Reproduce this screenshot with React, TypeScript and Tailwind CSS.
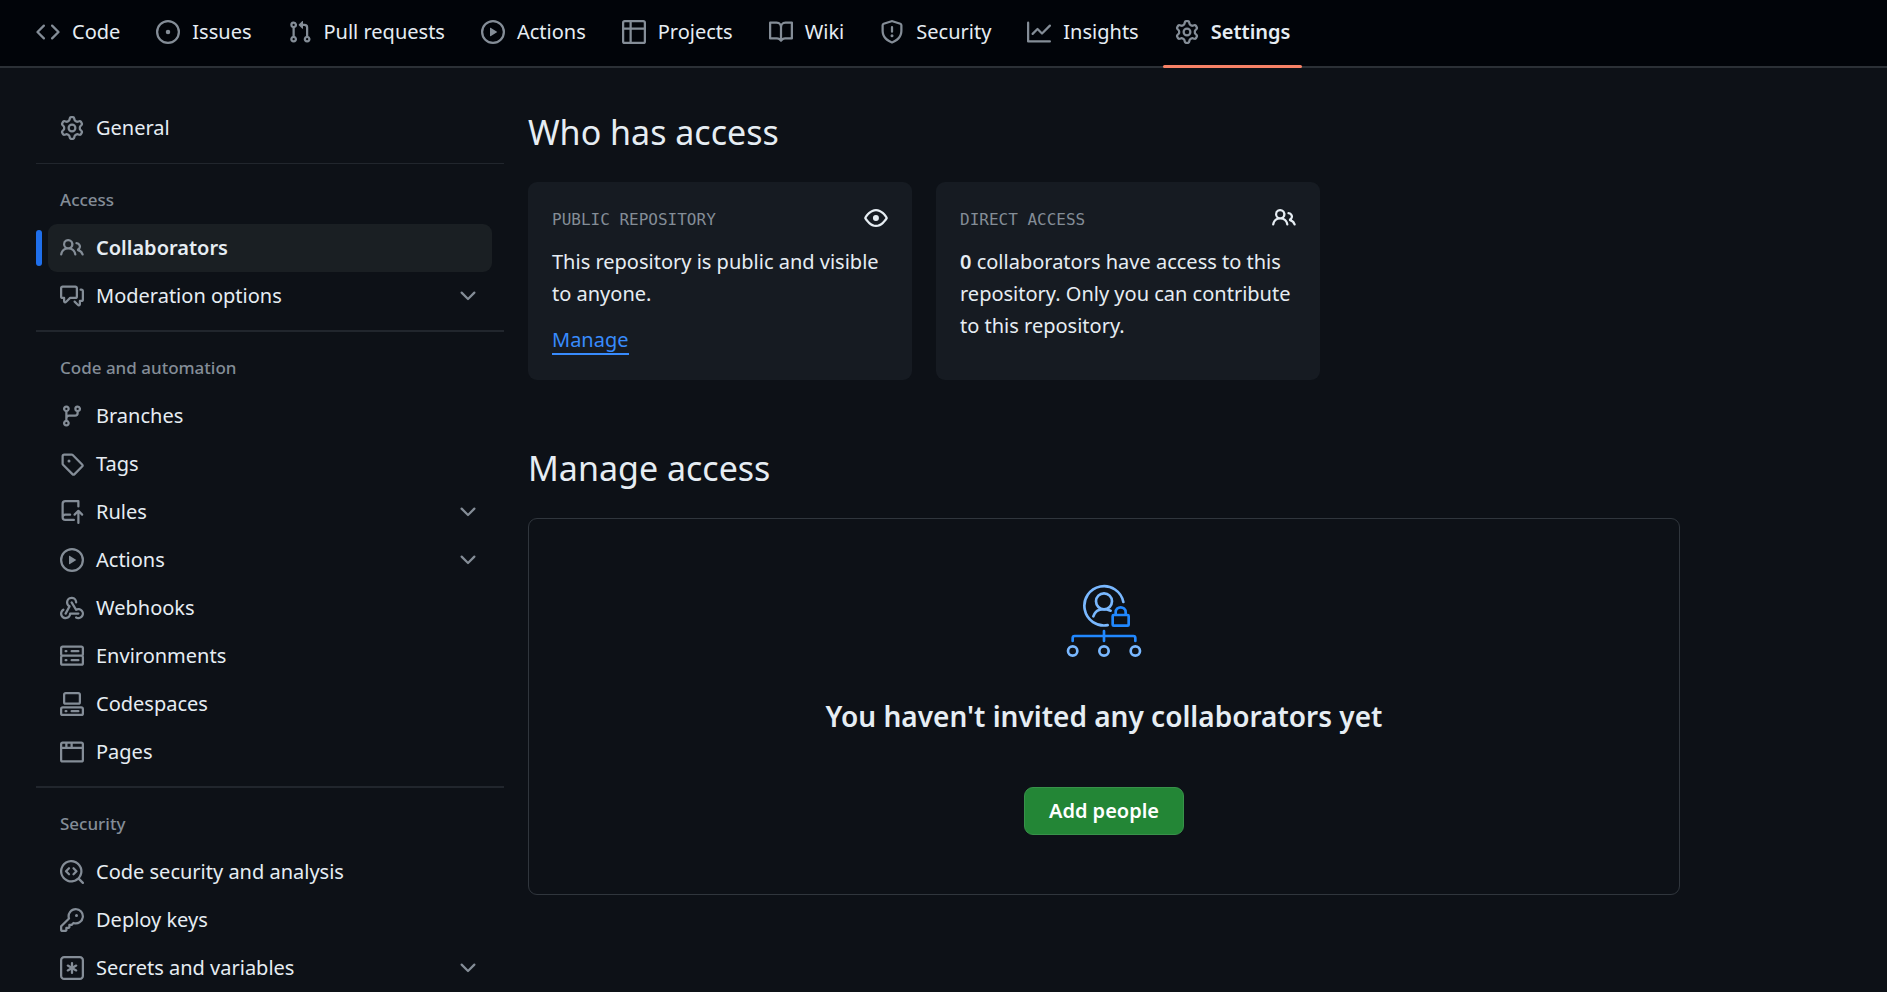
import React from "react";

const icons = {
  code: ["m11.28 3.22 4.25 4.25a.75.75 0 0 1 0 1.06l-4.25 4.25a.749.749 0 0 1-1.275-.326.749.749 0 0 1 .215-.734L13.94 8l-3.72-3.72a.749.749 0 0 1 .326-1.275.749.749 0 0 1 .734.215Zm-6.56 0a.751.751 0 0 1 1.042.018.751.751 0 0 1 .018 1.042L2.06 8l3.72 3.72a.749.749 0 0 1-.326 1.275.749.749 0 0 1-.734-.215L.47 8.53a.75.75 0 0 1 0-1.06Z"],
  issue: ["M8 9.5a1.5 1.5 0 1 0 0-3 1.5 1.5 0 0 0 0 3Z", "M8 0a8 8 0 1 1 0 16A8 8 0 0 1 8 0ZM1.5 8a6.5 6.5 0 1 0 13 0 6.5 6.5 0 0 0-13 0Z"],
  pull: ["M1.5 3.25a2.25 2.25 0 1 1 3 2.122v5.256a2.251 2.251 0 1 1-1.5 0V5.372A2.25 2.25 0 0 1 1.5 3.25Zm5.677-.177L9.573.677A.25.25 0 0 1 10 .854V2.5h1A2.5 2.5 0 0 1 13.5 5v5.628a2.251 2.251 0 1 1-1.5 0V5a1 1 0 0 0-1-1h-1v1.646a.25.25 0 0 1-.427.177L7.177 3.427a.25.25 0 0 1 0-.354ZM3.75 2.5a.75.75 0 1 0 0 1.5.75.75 0 0 0 0-1.5Zm0 9.5a.75.75 0 1 0 0 1.5.75.75 0 0 0 0-1.5Zm8.25.75a.75.75 0 1 0 1.5 0 .75.75 0 0 0-1.5 0Z"],
  play: ["M8 0a8 8 0 1 1 0 16A8 8 0 0 1 8 0ZM1.5 8a6.5 6.5 0 1 0 13 0 6.5 6.5 0 0 0-13 0Zm4.879-2.773 4.264 2.559a.25.25 0 0 1 0 .428l-4.264 2.559A.25.25 0 0 1 6 10.559V5.442a.25.25 0 0 1 .379-.215Z"],
  table: ["M0 1.75C0 .784.784 0 1.75 0h12.5C15.216 0 16 .784 16 1.75v12.5A1.75 1.75 0 0 1 14.25 16H1.75A1.75 1.75 0 0 1 0 14.25ZM6.5 6.5v8h7.75a.25.25 0 0 0 .25-.25V6.5Zm8-1.5V1.75a.25.25 0 0 0-.25-.25H6.5V5Zm-13 1.5v7.75c0 .138.112.25.25.25H5v-8ZM5 5V1.5H1.75a.25.25 0 0 0-.25.25V5Z"],
  book: ["M0 1.75A.75.75 0 0 1 .75 1h4.253c1.227 0 2.317.59 3 1.501A3.743 3.743 0 0 1 11.006 1h4.245a.75.75 0 0 1 .75.75v10.5a.75.75 0 0 1-.75.75h-4.507a2.25 2.25 0 0 0-1.591.659l-.622.621a.75.75 0 0 1-1.06 0l-.622-.621A2.25 2.25 0 0 0 5.258 13H.75a.75.75 0 0 1-.75-.75Zm7.251 10.324.004-5.073-.002-2.253A2.25 2.25 0 0 0 5.003 2.5H1.5v9h3.757a3.75 3.75 0 0 1 1.994.574ZM8.755 4.75l-.004 7.322a3.752 3.752 0 0 1 1.992-.572H14.5v-9h-3.495a2.25 2.25 0 0 0-2.25 2.25Z"],
  shield: ["M7.467.133a1.748 1.748 0 0 1 1.066 0l5.25 1.68A1.75 1.75 0 0 1 15 3.48V7c0 1.566-.32 3.182-1.303 4.682-.983 1.498-2.585 2.813-5.032 3.855a1.697 1.697 0 0 1-1.33 0c-2.447-1.042-4.049-2.357-5.032-3.855C1.32 10.182 1 8.566 1 7V3.48a1.75 1.75 0 0 1 1.217-1.667Zm.61 1.429a.25.25 0 0 0-.153 0l-5.25 1.68a.25.25 0 0 0-.174.238V7c0 1.358.275 2.666 1.057 3.86.784 1.194 2.121 2.34 4.366 3.297a.196.196 0 0 0 .154 0c2.245-.956 3.582-2.104 4.366-3.298C13.225 9.666 13.5 8.36 13.5 7V3.48a.251.251 0 0 0-.174-.237l-5.25-1.68ZM8.75 4.75v3a.75.75 0 0 1-1.5 0v-3a.75.75 0 0 1 1.5 0ZM9 10.5a1 1 0 1 1-2 0 1 1 0 0 1 2 0Z"],
  graph: ["M1.5 1.75V13.5h13.75a.75.75 0 0 1 0 1.5H.75a.75.75 0 0 1-.75-.75V1.75a.75.75 0 0 1 1.5 0Zm14.28 2.53-5.25 5.25a.75.75 0 0 1-1.06 0L7 7.06 4.28 9.78a.751.751 0 0 1-1.042-.018.751.751 0 0 1-.018-1.042l3.25-3.25a.75.75 0 0 1 1.06 0L10 7.94l4.72-4.72a.751.751 0 0 1 1.042.018.751.751 0 0 1 .018 1.042Z"],
  gear: ["M8 0a8.2 8.2 0 0 1 .701.031C9.444.095 9.99.645 10.16 1.29l.288 1.107c.018.066.079.158.212.224.231.114.454.243.668.386.123.082.233.09.299.071l1.103-.303c.644-.176 1.392.021 1.82.63.27.385.506.792.704 1.218.315.675.111 1.422-.364 1.891l-.814.806c-.049.048-.098.147-.088.294.016.257.016.515 0 .772-.01.147.038.246.088.294l.814.806c.475.469.679 1.216.364 1.891a7.977 7.977 0 0 1-.704 1.217c-.428.61-1.176.807-1.82.63l-1.102-.302c-.067-.019-.177-.011-.3.071a5.909 5.909 0 0 1-.668.386c-.133.066-.194.158-.211.224l-.29 1.106c-.168.646-.715 1.196-1.458 1.26a8.006 8.006 0 0 1-1.402 0c-.743-.064-1.289-.614-1.458-1.26l-.289-1.106c-.018-.066-.079-.158-.212-.224a5.738 5.738 0 0 1-.668-.386c-.123-.082-.233-.09-.299-.071l-1.103.303c-.644.176-1.392-.021-1.82-.63a8.12 8.12 0 0 1-.704-1.218c-.315-.675-.111-1.422.363-1.891l.815-.806c.05-.048.098-.147.088-.294a6.214 6.214 0 0 1 0-.772c.01-.147-.038-.246-.088-.294l-.815-.806C.635 6.045.431 5.298.746 4.623a7.92 7.92 0 0 1 .704-1.217c.428-.61 1.176-.807 1.82-.63l1.102.302c.067.019.177.011.3-.071.214-.143.437-.272.668-.386.133-.066.194-.158.211-.224l.29-1.106C6.009.645 6.556.095 7.299.03 7.53.01 7.764 0 8 0Zm-.571 1.525c-.036.003-.108.036-.137.146l-.289 1.105c-.147.561-.549.967-.998 1.189-.173.086-.34.183-.5.29-.417.278-.97.423-1.529.27l-1.103-.303c-.109-.03-.175.016-.195.045-.22.312-.412.644-.573.99-.014.031-.021.11.059.19l.815.806c.411.406.562.957.53 1.456a4.709 4.709 0 0 0 0 .582c.032.499-.119 1.05-.53 1.456l-.815.806c-.081.08-.073.159-.059.19.162.346.353.677.573.989.02.03.085.076.195.046l1.102-.303c.56-.153 1.113-.008 1.53.27.161.107.328.204.501.29.447.222.85.629.997 1.189l.289 1.105c.029.109.101.143.137.146a6.6 6.6 0 0 0 1.142 0c.036-.003.108-.036.137-.146l.289-1.105c.147-.561.549-.967.998-1.189.173-.086.34-.183.5-.29.417-.278.97-.423 1.529-.27l1.103.303c.109.029.175-.016.195-.045.22-.313.411-.644.573-.99.014-.031.021-.11-.059-.19l-.815-.806c-.411-.406-.562-.957-.53-1.456a4.709 4.709 0 0 0 0-.582c-.032-.499.119-1.05.53-1.456l.815-.806c.081-.08.073-.159.059-.19a6.464 6.464 0 0 0-.573-.989c-.02-.03-.085-.076-.195-.046l-1.102.303c-.56.153-1.113.008-1.53-.27a4.44 4.44 0 0 0-.501-.29c-.447-.222-.85-.629-.997-1.189l-.289-1.105c-.029-.11-.101-.143-.137-.146a6.6 6.6 0 0 0-1.142 0ZM11 8a3 3 0 1 1-6 0 3 3 0 0 1 6 0ZM9.5 8a1.5 1.5 0 1 0-3.001.001A1.5 1.5 0 0 0 9.5 8Z"],
  people: ["M2 5.5a3.5 3.5 0 1 1 5.898 2.549 5.508 5.508 0 0 1 3.034 4.084.75.75 0 1 1-1.482.235 4 4 0 0 0-7.9 0 .75.75 0 0 1-1.482-.236A5.507 5.507 0 0 1 3.102 8.05 3.493 3.493 0 0 1 2 5.5ZM11 4a3.001 3.001 0 0 1 2.22 5.018 5.01 5.01 0 0 1 2.56 3.012.749.749 0 0 1-.885.954.752.752 0 0 1-.549-.514 3.507 3.507 0 0 0-2.522-2.372.75.75 0 0 1-.574-.73v-.352a.75.75 0 0 1 .416-.672A1.5 1.5 0 0 0 11 5.5.75.75 0 0 1 11 4Zm-5.5-.5a2 2 0 1 0-.001 3.999A2 2 0 0 0 5.5 3.5Z"],
  discussion: ["M1.75 1h8.5c.966 0 1.75.784 1.75 1.75v5.5A1.75 1.75 0 0 1 10.25 10H7.061l-2.574 2.573A1.458 1.458 0 0 1 2 11.543V10h-.25A1.75 1.75 0 0 1 0 8.25v-5.5C0 1.784.784 1 1.75 1ZM1.5 2.75v5.5c0 .138.112.25.25.25h1a.75.75 0 0 1 .75.75v2.19l2.72-2.72a.749.749 0 0 1 .53-.22h3.5a.25.25 0 0 0 .25-.25v-5.5a.25.25 0 0 0-.25-.25h-8.5a.25.25 0 0 0-.25.25Zm13 2a.25.25 0 0 0-.25-.25h-.5a.75.75 0 0 1 0-1.5h.5c.966 0 1.75.784 1.75 1.75v5.5A1.75 1.75 0 0 1 14.25 12H14v1.543a1.458 1.458 0 0 1-2.487 1.03L9.22 12.28a.749.749 0 0 1 .326-1.275.749.749 0 0 1 .734.215l2.22 2.22v-2.19a.75.75 0 0 1 .75-.75h1a.25.25 0 0 0 .25-.25Z"],
  chevron: ["M12.78 5.22a.749.749 0 0 1 0 1.06l-4.25 4.25a.749.749 0 0 1-1.06 0L3.22 6.28a.749.749 0 1 1 1.06-1.06L8 8.939l3.72-3.719a.749.749 0 0 1 1.06 0Z"],
  branch: ["M9.5 3.25a2.25 2.25 0 1 1 3 2.122V6A2.5 2.5 0 0 1 10 8.5H6a1 1 0 0 0-1 1v1.128a2.251 2.251 0 1 1-1.5 0V5.372a2.25 2.25 0 1 1 1.5 0v1.836A2.493 2.493 0 0 1 6 7h4a1 1 0 0 0 1-1v-.628A2.25 2.25 0 0 1 9.5 3.25Zm-6 0a.75.75 0 1 0 1.5 0 .75.75 0 0 0-1.5 0Zm8.25-.75a.75.75 0 1 0 0 1.5.75.75 0 0 0 0-1.5ZM4.25 12a.75.75 0 1 0 0 1.5.75.75 0 0 0 0-1.5Z"],
  tag: ["M1 7.775V2.75C1 1.784 1.784 1 2.75 1h5.025c.464 0 .91.184 1.238.513l6.25 6.25a1.75 1.75 0 0 1 0 2.474l-5.026 5.026a1.75 1.75 0 0 1-2.474 0l-6.25-6.25A1.752 1.752 0 0 1 1 7.775Zm1.5 0c0 .066.026.13.073.177l6.25 6.25a.25.25 0 0 0 .354 0l5.025-5.025a.25.25 0 0 0 0-.354l-6.25-6.25a.25.25 0 0 0-.177-.073H2.75a.25.25 0 0 0-.25.25ZM6 5a1 1 0 1 1 0 2 1 1 0 0 1 0-2Z"],
  push: ["M1 2.5A2.5 2.5 0 0 1 3.5 0h8.75a.75.75 0 0 1 .75.75v3.5a.75.75 0 0 1-1.5 0V1.5h-8a1 1 0 0 0-1 1v6.708A2.493 2.493 0 0 1 3.5 9h3.25a.75.75 0 0 1 0 1.5H3.5a1 1 0 0 0 0 2h5.75a.75.75 0 0 1 0 1.5H3.5A2.5 2.5 0 0 1 1 11.5Zm13.23 7.79-1.22-1.224v6.184a.75.75 0 0 1-1.5 0V9.066L10.28 10.29a.75.75 0 0 1-1.06-1.061l2.505-2.504a.75.75 0 0 1 1.06 0L15.29 9.23a.751.751 0 0 1-.018 1.042.751.751 0 0 1-1.042.018Z"],
  webhook: ["M5.5 4.25a2.25 2.25 0 0 1 4.5 0 .75.75 0 0 0 1.5 0 3.75 3.75 0 1 0-6.14 2.889l-2.272 4.258a.75.75 0 0 0 1.324.706L7 7.25a.75.75 0 0 0-.309-1.015A2.25 2.25 0 0 1 5.5 4.25Z", "M7.364 3.607a.75.75 0 0 1 1.03.257l2.608 4.349a3.75 3.75 0 1 1-.628 6.785.75.75 0 0 1 .752-1.299 2.25 2.25 0 1 0-.033-3.88.75.75 0 0 1-1.03-.256L7.107 4.636a.75.75 0 0 1 .257-1.03Z", "M2.9 8.776A.75.75 0 0 1 2.625 9.8 2.25 2.25 0 1 0 6 11.75a.75.75 0 0 1 .75-.751h5.5a.75.75 0 0 1 0 1.5H7.425a3.751 3.751 0 1 1-5.55-3.998.75.75 0 0 1 1.024.274Z"],
  server: ["M1.75 1h12.5c.966 0 1.75.784 1.75 1.75v4c0 .372-.116.717-.314 1 .198.283.314.628.314 1v4a1.75 1.75 0 0 1-1.75 1.75H1.75A1.75 1.75 0 0 1 0 12.75v-4c0-.358.109-.707.314-1a1.739 1.739 0 0 1-.314-1v-4C0 1.784.784 1 1.75 1ZM1.5 2.75v4c0 .138.112.25.25.25h12.5a.25.25 0 0 0 .25-.25v-4a.25.25 0 0 0-.25-.25H1.75a.25.25 0 0 0-.25.25Zm.25 5.75a.25.25 0 0 0-.25.25v4c0 .138.112.25.25.25h12.5a.25.25 0 0 0 .25-.25v-4a.25.25 0 0 0-.25-.25ZM7 4.75A.75.75 0 0 1 7.75 4h4.5a.75.75 0 0 1 0 1.5h-4.5A.75.75 0 0 1 7 4.75ZM7.75 10h4.5a.75.75 0 0 1 0 1.5h-4.5a.75.75 0 0 1 0-1.5ZM3 4.75A.75.75 0 0 1 3.75 4h.5a.75.75 0 0 1 0 1.5h-.5A.75.75 0 0 1 3 4.75ZM3.75 10h.5a.75.75 0 0 1 0 1.5h-.5a.75.75 0 0 1 0-1.5Z"],
  codespaces: ["M0 11.25c0-.966.784-1.75 1.75-1.75h12.5c.966 0 1.75.784 1.75 1.75v3A1.75 1.75 0 0 1 14.25 16H1.75A1.75 1.75 0 0 1 0 14.25Zm2-9.5C2 .784 2.784 0 3.75 0h8.5C13.216 0 14 .784 14 1.75v5a1.75 1.75 0 0 1-1.75 1.75h-8.5A1.75 1.75 0 0 1 2 6.75Zm1.75-.25a.25.25 0 0 0-.25.25v5c0 .138.112.25.25.25h8.5a.25.25 0 0 0 .25-.25v-5a.25.25 0 0 0-.25-.25Zm-2 9.5a.25.25 0 0 0-.25.25v3c0 .138.112.25.25.25h12.5a.25.25 0 0 0 .25-.25v-3a.25.25 0 0 0-.25-.25Z", "M7 12.75a.75.75 0 0 1 .75-.75h4.5a.75.75 0 0 1 0 1.5h-4.5a.75.75 0 0 1-.75-.75Zm-4 0a.75.75 0 0 1 .75-.75h.5a.75.75 0 0 1 0 1.5h-.5a.75.75 0 0 1-.75-.75Z"],
  browser: ["M0 2.75C0 1.784.784 1 1.75 1h12.5c.966 0 1.75.784 1.75 1.75v10.5A1.75 1.75 0 0 1 14.25 15H1.75A1.75 1.75 0 0 1 0 13.25ZM14.5 6h-13v7.25c0 .138.112.25.25.25h12.5a.25.25 0 0 0 .25-.25Zm-6-3.5v2h6V2.75a.25.25 0 0 0-.25-.25ZM5 2.5v2h2v-2Zm-3.25 0a.25.25 0 0 0-.25.25V4.5h2v-2Z"],
  codescan: ["M8.47 4.97a.75.75 0 0 0 0 1.06L9.94 7.5 8.47 8.97a.75.75 0 1 0 1.06 1.06l2-2a.75.75 0 0 0 0-1.06l-2-2a.75.75 0 0 0-1.06 0ZM6.53 6.03a.75.75 0 0 0-1.06-1.06l-2 2a.75.75 0 0 0 0 1.06l2 2a.75.75 0 1 0 1.06-1.06L5.06 7.5l1.47-1.47Z", "M12.246 13.307a7.501 7.501 0 1 1 1.06-1.06l2.474 2.473a.749.749 0 0 1-.326 1.275.749.749 0 0 1-.734-.215ZM1.5 7.5a6.002 6.002 0 0 0 3.608 5.504 6.002 6.002 0 0 0 6.486-1.117.748.748 0 0 1 .292-.293A6 6 0 1 0 1.5 7.5Z"],
  key: ["M10.5 0a5.499 5.499 0 1 1-1.288 10.848l-.932.932a.749.749 0 0 1-.53.22H7v.75a.749.749 0 0 1-.22.53l-.5.5a.749.749 0 0 1-.53.22H5v.75a.749.749 0 0 1-.22.53l-.5.5a.749.749 0 0 1-.53.22h-2A1.75 1.75 0 0 1 0 14.25v-2c0-.199.079-.389.22-.53l4.932-4.932A5.5 5.5 0 0 1 10.5 0Zm-4 5.5c-.001.431.069.86.205 1.269a.75.75 0 0 1-.181.768L1.5 12.56v1.69c0 .138.112.25.25.25h1.69l.06-.06v-1.19a.75.75 0 0 1 .75-.75h1.19l.06-.06v-1.19a.75.75 0 0 1 .75-.75h1.19l1.023-1.025a.75.75 0 0 1 .768-.18A4 4 0 1 0 6.5 5.5ZM11 6a1 1 0 1 1 0-2 1 1 0 0 1 0 2Z"],
  asterisk: ["M0 2.75A2.75 2.75 0 0 1 2.75 0h10.5A2.75 2.75 0 0 1 16 2.75v10.5A2.75 2.75 0 0 1 13.25 16H2.75A2.75 2.75 0 0 1 0 13.25ZM2.75 1.5c-.69 0-1.25.56-1.25 1.25v10.5c0 .69.56 1.25 1.25 1.25h10.5c.69 0 1.25-.56 1.25-1.25V2.75c0-.69-.56-1.25-1.25-1.25Z", "M8 4a.75.75 0 0 1 .75.75V6.7l1.69-.975a.75.75 0 0 1 .75 1.3L9.5 8l1.69.976a.75.75 0 0 1-.75 1.298L8.75 9.3v1.951a.75.75 0 0 1-1.5 0V9.299l-1.69.976a.75.75 0 0 1-.75-1.3L6.5 8l-1.69-.975a.75.75 0 0 1 .75-1.3l1.69.976V4.75A.75.75 0 0 1 8 4Z"],
  eye: ["M8 2c1.981 0 3.671.992 4.933 2.078 1.27 1.091 2.187 2.345 2.637 3.023a1.62 1.62 0 0 1 0 1.798c-.45.678-1.367 1.932-2.637 3.023C11.67 13.008 9.981 14 8 14c-1.981 0-3.671-.992-4.933-2.078C1.797 10.83.88 9.576.43 8.898a1.62 1.62 0 0 1 0-1.798c.45-.677 1.367-1.931 2.637-3.022C4.33 2.992 6.019 2 8 2ZM1.679 7.932a.12.12 0 0 0 0 .136c.411.622 1.241 1.75 2.366 2.717C5.176 11.758 6.527 12.5 8 12.5c1.473 0 2.825-.742 3.955-1.715 1.124-.967 1.954-2.096 2.366-2.717a.12.12 0 0 0 0-.136c-.412-.621-1.242-1.75-2.366-2.717C10.824 4.242 9.473 3.5 8 3.5c-1.473 0-2.825.742-3.955 1.715-1.124.967-1.954 2.096-2.366 2.717ZM8 10a2 2 0 1 1-.001-3.999A2 2 0 0 1 8 10Z"],
};

type IconName = keyof typeof icons;

function Icon({ name, className = "text-[#848d97]" }: { name: IconName; className?: string }) {
  return (
    <svg viewBox="0 0 16 16" fill="currentColor" aria-hidden="true" className={`size-6 shrink-0 ${className}`}>
      {icons[name].map((d) => (
        <path key={d} d={d} />
      ))}
    </svg>
  );
}

const tabs: { label: string; icon: IconName; active?: boolean }[] = [
  { label: "Code", icon: "code" },
  { label: "Issues", icon: "issue" },
  { label: "Pull requests", icon: "pull" },
  { label: "Actions", icon: "play" },
  { label: "Projects", icon: "table" },
  { label: "Wiki", icon: "book" },
  { label: "Security", icon: "shield" },
  { label: "Insights", icon: "graph" },
  { label: "Settings", icon: "gear", active: true },
];

type Item = { label: string; icon: IconName; expandable?: boolean; active?: boolean };

const groups: { title: string; items: Item[] }[] = [
  {
    title: "Access",
    items: [
      { label: "Collaborators", icon: "people", active: true },
      { label: "Moderation options", icon: "discussion", expandable: true },
    ],
  },
  {
    title: "Code and automation",
    items: [
      { label: "Branches", icon: "branch" },
      { label: "Tags", icon: "tag" },
      { label: "Rules", icon: "push", expandable: true },
      { label: "Actions", icon: "play", expandable: true },
      { label: "Webhooks", icon: "webhook" },
      { label: "Environments", icon: "server" },
      { label: "Codespaces", icon: "codespaces" },
      { label: "Pages", icon: "browser" },
    ],
  },
  {
    title: "Security",
    items: [
      { label: "Code security and analysis", icon: "codescan" },
      { label: "Deploy keys", icon: "key" },
      { label: "Secrets and variables", icon: "asterisk", expandable: true },
    ],
  },
];

function SideItem({ item }: { item: Item }) {
  const row = "flex h-12 w-full items-center gap-3 rounded-[9px] px-3 text-left";
  return (
    <li className="relative px-3">
      {item.active && <span className="absolute top-[6px] left-0 h-9 w-[6px] rounded-[3px] bg-[#1f6feb]" />}
      {item.expandable ? (
        <button type="button" aria-expanded="false" className={row}>
          <Icon name={item.icon} />
          <span className="flex-1">{item.label}</span>
          <Icon name="chevron" />
        </button>
      ) : (
        <a
          href="#"
          aria-current={item.active ? "page" : undefined}
          className={item.active ? `${row} bg-[#1a1f23] font-semibold` : row}
        >
          <Icon name={item.icon} />
          <span>{item.label}</span>
        </a>
      )}
    </li>
  );
}

function Card({ title, icon, children }: { title: string; icon: IconName; children: React.ReactNode }) {
  return (
    <section className="w-96 rounded-[9px] bg-[#161b22] p-6">
      <div className="flex h-6 items-center justify-between">
        <h3 className="pt-1 font-['DejaVu_Sans_Mono',monospace] text-base text-[#848d97] uppercase">{title}</h3>
        <Icon name={icon} className="text-[#e6edf3]" />
      </div>
      <div className="mt-4 leading-8">{children}</div>
    </section>
  );
}

function AccessIllustration() {
  return (
    <svg viewBox="48 39 228 222" fill="none" strokeWidth="8" strokeLinecap="round" aria-hidden="true" className="h-[74px] w-[76px]">
      <g stroke="#79b8ff">
        <path d="M220 93A59 59 0 1 0 173 162.500" />
        <circle cx="162" cy="91" r="24" />
        <path d="M130 136C136 118 152 109 182 119" />
        <circle cx="68" cy="240" r="14" />
        <circle cx="162" cy="240" r="14" />
        <circle cx="256" cy="240" r="14" />
      </g>
      <g stroke="#2188ff">
        <rect x="188" y="132" width="48" height="32" rx="3" />
        <path d="M197 131V124C197 104 227 104 227 124V131" />
        <path d="M68 210V201Q68 195 74 195H250Q256 195 256 201V210M162 180V210" />
      </g>
    </svg>
  );
}

export default function App() {
  return (
    <div className="h-screen overflow-hidden bg-[#0d1117] font-['Noto_Sans',sans-serif] text-[20px] text-[#e6edf3]">
      <header className="bg-[#010409]">
        <nav aria-label="Repository" className="border-b-2 border-[#2b3036] px-6">
          <ul className="flex h-[66px] gap-3">
            {tabs.map((tab) => (
              <li key={tab.label} className="relative">
                <a
                  href="#"
                  aria-current={tab.active ? "page" : undefined}
                  className={`flex h-16 items-center gap-3 px-3 whitespace-nowrap ${tab.active ? "font-semibold" : ""}`}
                >
                  <Icon name={tab.icon} />
                  {tab.label}
                </a>
                {tab.active && <span className="absolute inset-x-0 -bottom-[2px] h-[3px] rounded-full bg-[#f78166]" />}
              </li>
            ))}
          </ul>
        </nav>
      </header>

      <div className="flex gap-6 px-9 pt-9">
        <nav aria-label="Settings" className="w-[468px] shrink-0">
          <ul>
            <SideItem item={{ label: "General", icon: "gear" }} />
          </ul>
          {groups.map((group) => (
            <section key={group.title} className="mt-[10px] border-t-2 border-[#21262d] first-of-type:mt-[11px] first-of-type:border-t">
              <h2 className="flex h-[60px] items-center px-6 pt-3 text-[17px] font-medium text-[#848d97]">{group.title}</h2>
              <ul>
                {group.items.map((item) => (
                  <SideItem key={item.label} item={item} />
                ))}
              </ul>
            </section>
          ))}
        </nav>

        <main className="max-w-[1152px] min-w-0 flex-1 pt-1">
          <h2 className="text-[34px] leading-[48px]">Who has access</h2>
          <div className="mt-[26px] flex gap-6">
            <Card title="Public repository" icon="eye">
              <p>This repository is public and visible to anyone.</p>
              <a href="#" className="mt-4 inline-block border-b-2 border-[#388bfd] leading-[27px] text-[#388bfd]">
                Manage
              </a>
            </Card>
            <Card title="Direct access" icon="people">
              <p>
                <strong className="font-semibold">0</strong> collaborators have access to this repository. Only you can contribute to this repository.
              </p>
            </Card>
          </div>

          <h2 className="mt-16 text-[34px] leading-[48px]">Manage access</h2>
          <section className="mt-[26px] flex flex-col items-center rounded-[9px] border border-[#30363d] px-6 pt-[65px] pb-[59px]">
            <AccessIllustration />
            <h3 className="mt-9 text-[28px] leading-[45px] font-semibold">You haven't invited any collaborators yet</h3>
            <button type="button" className="mt-12 h-12 rounded-[9px] border border-[#38924a] bg-[#238636] px-6 font-semibold text-white">
              Add people
            </button>
          </section>
        </main>
      </div>
    </div>
  );
}
